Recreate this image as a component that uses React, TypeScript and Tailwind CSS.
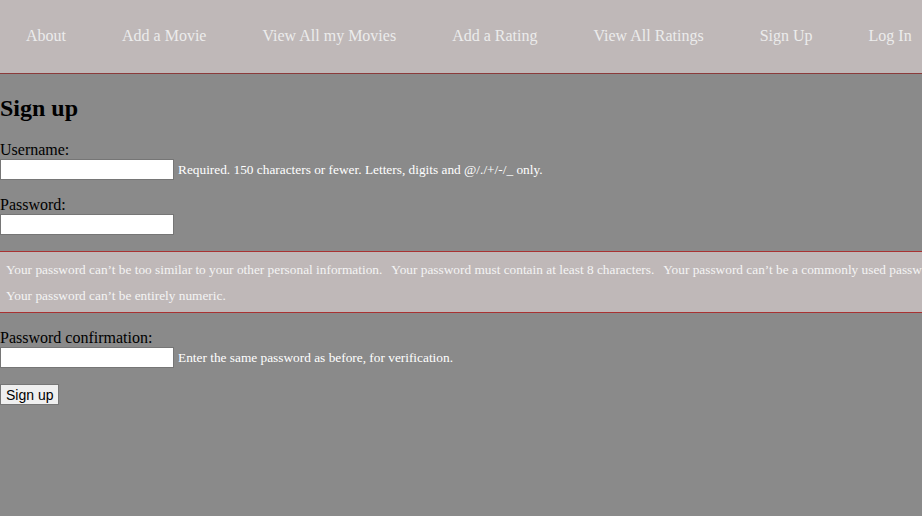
import React from 'react';

const links = ['About', 'Add a Movie', 'View All my Movies', 'Add a Rating', 'View All Ratings', 'Sign Up', 'Log In'];

const rules = [
  'Your password can’t be too similar to your other personal information.',
  'Your password must contain at least 8 characters.',
  'Your password can’t be a commonly used password.',
];

function Field({ label, help, type = 'text' }: { label: string; help?: string; type?: string }) {
  return (
    <div>
      <label className="block text-[16px] leading-[18px] text-black">{label}</label>
      <div className="flex items-center h-[21px]">
        <input
          type={type}
          className="w-[174px] h-[21px] bg-white border border-[#767676] px-[2px] text-[13px] outline-none"
        />
        {help && <span className="ml-[4px] text-[13.33px] text-white whitespace-nowrap">{help}</span>}
      </div>
    </div>
  );
}

export default function App() {
  return (
    <div
      className="w-[922px] h-[516px] overflow-hidden bg-[#8a8a8a]"
      style={{ fontFamily: '"Liberation Serif", "Times New Roman", serif' }}
    >
      <nav className="h-[74px] bg-[#bfb8b8] border-b border-[#8b3b3b] flex items-center gap-[56px] pl-[26px] pb-[2px]">
        {links.map((l) => (
          <a key={l} className="text-[16px] text-[#ececec] whitespace-nowrap cursor-pointer">
            {l}
          </a>
        ))}
      </nav>

      <h2 className="mt-[20px] mb-[19px] text-[24px] leading-[28px] font-bold text-black">Sign up</h2>

      <div className="flex flex-col">
        <Field label="Username:" help="Required. 150 characters or fewer. Letters, digits and @/./+/-/_ only." />
        <div className="mt-[16px]">
          <Field label="Password:" type="password" />
        </div>

        <div className="mt-[16px] bg-[#bfb8b8] border-y border-[#a83232] pl-[6px] pt-[5px] pb-[3px] text-[13.33px] leading-[26px] text-[#f4f4f4]">
          <div className="flex gap-[9px] whitespace-nowrap">
            {rules.map((r) => (
              <span key={r}>{r}</span>
            ))}
          </div>
          <div>Your password can’t be entirely numeric.</div>
        </div>

        <div className="mt-[16px]">
          <Field label="Password confirmation:" type="password" help="Enter the same password as before, for verification." />
        </div>

        <div className="mt-[16px] flex">
          <button
            className="h-[21px] px-[5px] bg-[#efefef] border border-[#767676] text-[14px] leading-[16px] text-black"
            style={{ fontFamily: '"Liberation Sans", Arial, sans-serif' }}
          >
            Sign up
          </button>
        </div>
      </div>
    </div>
  );
}
